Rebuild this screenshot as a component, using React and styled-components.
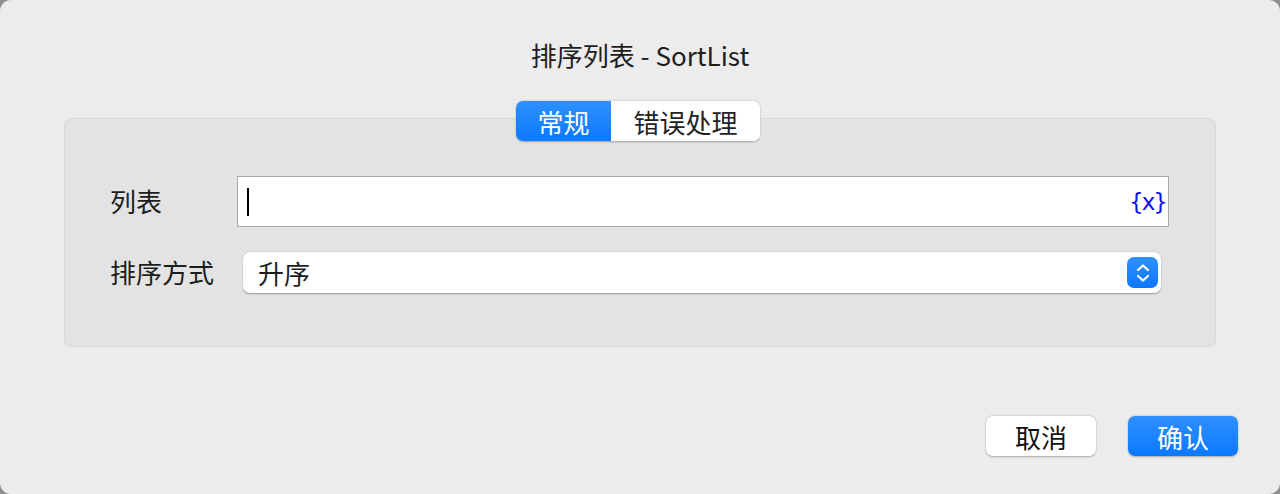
import React from 'react';
import styled, { createGlobalStyle } from 'styled-components';

const GlobalStyle = createGlobalStyle`
  html, body {
    margin: 0;
    padding: 0;
    background: #8e8e8e;
  }
  body {
    font-family: "Noto Sans CJK SC", "Noto Sans", sans-serif;
  }
`;

const blueGradient = 'linear-gradient(180deg, #2f91ff 0%, #0a78ff 100%)';

const Window = styled.div`
  width: 1280px;
  height: 494px;
  box-sizing: border-box;
  background: #ececec;
  border-radius: 11px;
  display: flex;
  flex-direction: column;
  overflow: hidden;
`;

const Title = styled.div`
  margin-top: 37px;
  height: 36px;
  line-height: 36px;
  text-align: center;
  font-size: 26px;
  color: #1d1d1d;
`;

const TabBar = styled.div`
  margin-top: 28px;
  display: flex;
  justify-content: center;
  position: relative;
  z-index: 1;
`;

const Segmented = styled.div`
  display: flex;
  height: 40px;
  border-radius: 7px;
  background: #fff;
  box-shadow: 0 0.5px 2px rgba(0, 0, 0, 0.3);
  overflow: hidden;
  transform: translateX(-2px);
`;

const Tab = styled.div`
  width: ${p => p.$w}px;
  display: flex;
  align-items: center;
  justify-content: center;
  font-size: 26px;
  color: ${p => (p.$active ? '#fff' : '#222')};
  background: ${p => (p.$active ? blueGradient : '#fff')};
`;

const Panel = styled.div`
  margin: -23px 64px 0 64px;
  height: 229px;
  box-sizing: border-box;
  background: #e3e3e3;
  border: 1px solid #d8d8d8;
  border-radius: 7px;
  padding: 57px 46px 0 45px;
  display: flex;
  flex-direction: column;
  gap: 25px;
`;

const Row = styled.div`
  display: flex;
  align-items: center;
`;

const Label = styled.div`
  width: ${p => p.$w}px;
  flex-shrink: 0;
  font-size: 26px;
  line-height: 36px;
  margin-top: -2px;
  color: #1d1d1d;
`;

const TextInput = styled.div`
  flex: 1;
  height: 51px;
  box-sizing: border-box;
  background: #fff;
  border: 1px solid #a9a9a9;
  display: flex;
  align-items: center;
  padding: 0 2px 0 9px;
`;

const Caret = styled.div`
  width: 2px;
  height: 28px;
  background: #000;
`;

const VarButton = styled.div`
  margin-left: auto;
  font-size: 23px;
  letter-spacing: -2px;
  color: #1010f2;
  font-family: "DejaVu Sans", "Noto Sans", sans-serif;
`;

const Select = styled.div`
  flex: 1;
  margin-right: 8px;
  height: 41px;
  box-sizing: border-box;
  background: #fff;
  border-radius: 7px;
  box-shadow: 0 0.5px 1.5px rgba(0, 0, 0, 0.35);
  display: flex;
  align-items: center;
  padding: 0 3px 0 15px;
  font-size: 26px;
  color: #1d1d1d;
`;

const Stepper = styled.div`
  margin-left: auto;
  width: 31px;
  height: 31px;
  border-radius: 7px;
  background: ${blueGradient};
  display: flex;
  align-items: center;
  justify-content: center;
`;

const Footer = styled.div`
  margin-top: 69px;
  padding-right: 42px;
  display: flex;
  justify-content: flex-end;
  gap: 32px;
`;

const Button = styled.div`
  width: 110px;
  height: 40px;
  border-radius: 7px;
  display: flex;
  align-items: center;
  justify-content: center;
  font-size: 26px;
  color: ${p => (p.$primary ? '#fff' : '#111')};
  background: ${p => (p.$primary ? blueGradient : '#fff')};
  box-shadow: 0 0.5px 2px rgba(0, 0, 0, 0.3);
`;

export default function App() {
  return (
    <>
      <GlobalStyle />
      <Window>
        <Title>排序列表 - SortList</Title>
        <TabBar>
          <Segmented>
            <Tab $w={95} $active>常规</Tab>
            <Tab $w={149}>错误处理</Tab>
          </Segmented>
        </TabBar>
        <Panel>
          <Row>
            <Label $w={127}>列表</Label>
            <TextInput>
              <Caret />
              <VarButton>{'{x}'}</VarButton>
            </TextInput>
          </Row>
          <Row>
            <Label $w={133}>排序方式</Label>
            <Select>
              升序
              <Stepper>
                <svg width="16" height="22" viewBox="0 0 16 22" fill="none">
                  <path d="M3 8 L8 3.5 L13 8" stroke="#fff" strokeWidth="2.2" strokeLinecap="round" strokeLinejoin="round" />
                  <path d="M3 14 L8 18.5 L13 14" stroke="#fff" strokeWidth="2.2" strokeLinecap="round" strokeLinejoin="round" />
                </svg>
              </Stepper>
            </Select>
          </Row>
        </Panel>
        <Footer>
          <Button>取消</Button>
          <Button $primary>确认</Button>
        </Footer>
      </Window>
    </>
  );
}
